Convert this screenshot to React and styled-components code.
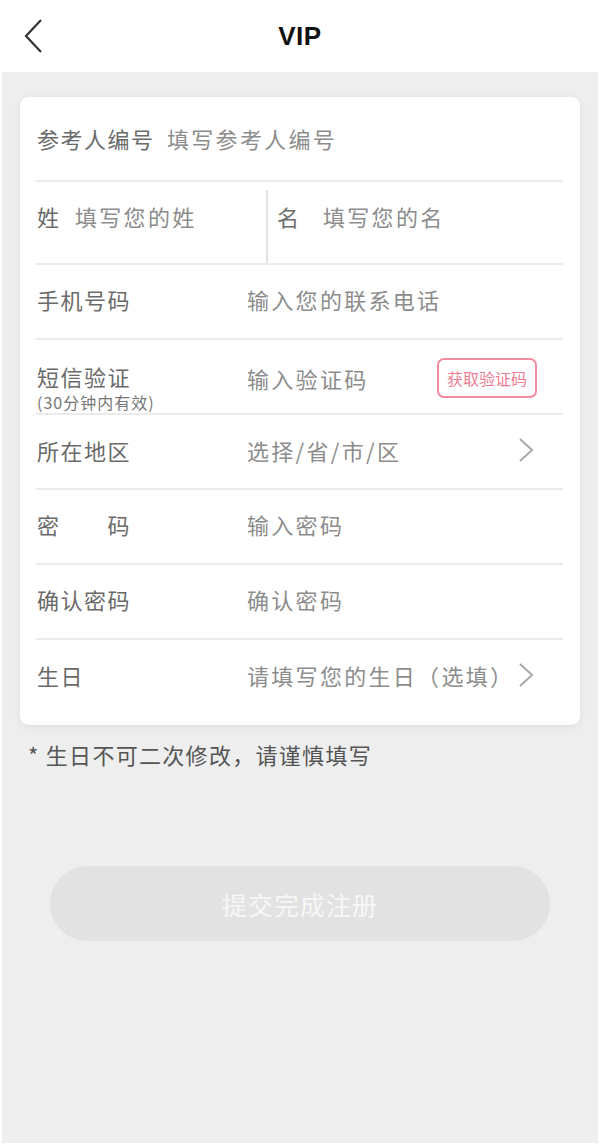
import React from "react";
import styled, { createGlobalStyle } from "styled-components";

const Global = createGlobalStyle`
  html, body {
    margin: 0;
    padding: 0;
    background: #ffffff;
  }
  body {
    font-family: "Noto Sans CJK SC", "Noto Sans", "Liberation Sans", sans-serif;
  }
`;

const Page = styled.div`
  width: 600px;
  height: 1147px;
  display: flex;
  flex-direction: column;
  background: #ffffff;
`;

const Header = styled.div`
  height: 72px;
  flex-shrink: 0;
  display: flex;
  align-items: center;
  justify-content: center;
  position: relative;
  background: #ffffff;
`;

const BackButton = styled.div`
  position: absolute;
  left: 22px;
  top: 18px;
  width: 24px;
  height: 36px;
`;

const Title = styled.h1`
  margin: 0;
  font-family: "Liberation Sans", "Noto Sans", sans-serif;
  font-size: 26px;
  font-weight: 700;
  color: #111;
  letter-spacing: 0.5px;
`;

const Body = styled.div`
  flex: 1;
  margin: 0 2px 4px 2px;
  background: #eeeeee;
  padding: 25px 18px 0 18px;
  display: flex;
  flex-direction: column;
`;

const Card = styled.div`
  background: #ffffff;
  border-radius: 9px;
  padding: 0 17px 0 16px;
  box-shadow: 0 2px 8px rgba(0, 0, 0, 0.07);
`;

const Row = styled.div`
  height: ${(p) => p.$h}px;
  display: flex;
  align-items: center;
  padding-top: ${(p) => p.$pt || 0}px;
  padding-bottom: ${(p) => p.$pb || 0}px;
  box-sizing: border-box;
  border-bottom: ${(p) => (p.$last ? "none" : "2px solid #ebebeb")};
  padding-left: 1px;
`;

const NameRow = styled.div`
  height: 83px;
  display: flex;
  align-items: stretch;
  box-sizing: border-box;
  border-bottom: 2px solid #ebebeb;
  padding-left: 1px;
`;

const Label = styled.div`
  width: ${(p) => p.$w || 210}px;
  flex-shrink: 0;
  display: flex;
  flex-direction: column;
  font-size: 22px;
  letter-spacing: 1.5px;
  color: #6a6a6a;
  line-height: 28px;
  white-space: nowrap;
`;

const StackedLabel = styled(Label)`
  align-self: flex-start;
  padding-top: ${(p) => p.$top}px;
`;

const SubLabel = styled.span`
  margin-top: 2px;
  font-size: 16px;
  letter-spacing: 1px;
  line-height: 20px;
  color: #777777;
`;

const Placeholder = styled.div`
  flex: 1;
  font-size: 22px;
  letter-spacing: 2.3px;
  color: #8c8c8c;
  line-height: 28px;
  white-space: nowrap;
`;

const Half = styled.div`
  flex: ${(p) => (p.$divided ? 1 : "0 0 229px")};
  display: flex;
  align-items: flex-start;
  padding-top: ${(p) => (p.$divided ? 12 : 20)}px;
  box-sizing: border-box;
  border-left: ${(p) => (p.$divided ? "2px solid #e2e2e2" : "none")};
  padding-left: ${(p) => (p.$divided ? 9 : 0)}px;
  margin-top: ${(p) => (p.$divided ? 8 : 0)}px;
`;

const CodeButton = styled.div`
  width: 100px;
  height: 40px;
  box-sizing: border-box;
  border: 2px solid #f28ca0;
  border-radius: 7px;
  display: flex;
  align-items: center;
  justify-content: center;
  font-size: 16px;
  color: #ee7d93;
  margin-right: 26px;
`;

const Chevron = styled.div`
  width: 20px;
  height: 28px;
  margin-right: 27px;
  display: flex;
  align-items: center;
  justify-content: center;
`;

const Note = styled.p`
  margin: 14px 0 0 8px;
  font-size: 22px;
  letter-spacing: 1.3px;
  line-height: 30px;
  color: #555555;
`;

const Submit = styled.button`
  margin: 97px 30px 0 30px;
  height: 75px;
  border: none;
  border-radius: 38px;
  background: #e2e2e2;
  color: #f7f7f7;
  font-family: "Noto Sans CJK SC", sans-serif;
  font-size: 25px;
  letter-spacing: 1px;
`;

const Arrow = () => (
  <svg width="18" height="26" viewBox="0 0 18 26">
    <path d="M3 2 L15 13 L3 24" fill="none" stroke="#a8a8a8" strokeWidth="2" />
  </svg>
);

const App = () => {
  return (
    <Page>
      <Global />
      <Header>
        <BackButton>
          <svg width="24" height="36" viewBox="0 0 24 36">
            <path d="M19 2 L4 18 L19 34" fill="none" stroke="#333" strokeWidth="2.2" />
          </svg>
        </BackButton>
        <Title>VIP</Title>
      </Header>
      <Body>
        <Card>
          <Row $h={85} $pb={2}>
            <Label $w={130}>参考人编号</Label>
            <Placeholder>填写参考人编号</Placeholder>
          </Row>
          <NameRow>
            <Half>
              <Label $w={38}>姓</Label>
              <Placeholder>填写您的姓</Placeholder>
            </Half>
            <Half $divided>
              <Label $w={46}>名</Label>
              <Placeholder>填写您的名</Placeholder>
            </Half>
          </NameRow>
          <Row $h={75} $pb={6}>
            <Label>手机号码</Label>
            <Placeholder>输入您的联系电话</Placeholder>
          </Row>
          <Row $h={75} $pt={2}>
            <StackedLabel $top={20}>
              短信验证
              <SubLabel>(30分钟内有效)</SubLabel>
            </StackedLabel>
            <Placeholder>输入验证码</Placeholder>
            <CodeButton>获取验证码</CodeButton>
          </Row>
          <Row $h={75} $pb={4}>
            <Label>所在地区</Label>
            <Placeholder>选择/省/市/区</Placeholder>
            <Chevron>
              <Arrow />
            </Chevron>
          </Row>
          <Row $h={75} $pb={6}>
            <Label>密　　码</Label>
            <Placeholder>输入密码</Placeholder>
          </Row>
          <Row $h={75} $pb={6}>
            <Label>确认密码</Label>
            <Placeholder>确认密码</Placeholder>
          </Row>
          <Row $h={85} $last $pb={16}>
            <Label>生日</Label>
            <Placeholder>请填写您的生日（选填）</Placeholder>
            <Chevron>
              <Arrow />
            </Chevron>
          </Row>
        </Card>
        <Note>* 生日不可二次修改，请谨慎填写</Note>
        <Submit>提交完成注册</Submit>
      </Body>
    </Page>
  );
};

export default App;
